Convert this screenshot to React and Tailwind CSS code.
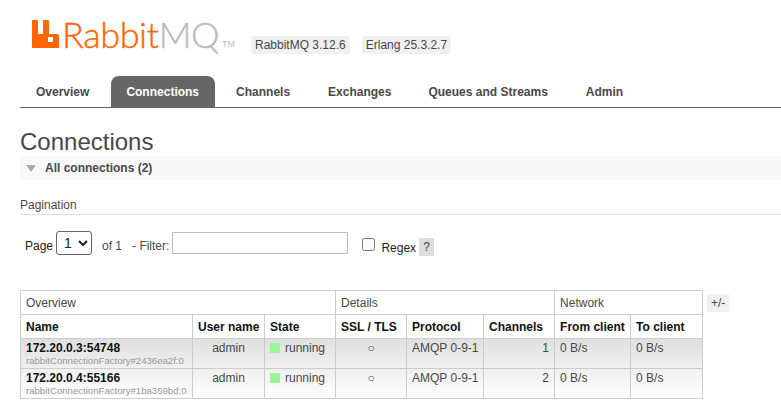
const tabs = [
  { label: "Overview", cls: "px-[15px] mr-[7px]" },
  { label: "Connections", cls: "pl-[15px] pr-[16px] mr-[6px]", active: true },
  { label: "Channels", cls: "px-[15px] mr-[8px]" },
  { label: "Exchanges", cls: "px-[15px] mr-[7px]" },
  { label: "Queues and Streams", cls: "px-[15px] mr-[8px]" },
  { label: "Admin", cls: "px-[15px]" },
];

const rows = [
  { name: "172.20.0.3:54748", sub: "rabbitConnectionFactory#2436ea2f:0", channels: 1, bg: "bg-gradient-to-b from-[#e0e0e0] to-[#f0f0f0]" },
  { name: "172.20.0.4:55166", sub: "rabbitConnectionFactory#1ba359bd:0", channels: 2, bg: "bg-gradient-to-b from-[#f0f0f0] to-white" },
];

const cell = "border border-[#ccc] px-[5px] pt-[2px] align-top whitespace-nowrap leading-[14px]";
const headCell = "border border-[#ccc] px-[5px] text-left font-bold text-[#111] h-[24px] whitespace-nowrap";

function Logo() {
  return (
    <svg width="27" height="28" viewBox="0 0 27 28" className="shrink-0">
      <path
        fill="#ff6600"
        d="M1 0h4a1 1 0 0 1 1 1v13h5V1a1 1 0 0 1 1-1h4a1 1 0 0 1 1 1v13h8a2 2 0 0 1 2 2v11a1 1 0 0 1-1 1H1a1 1 0 0 1-1-1V1a1 1 0 0 1 1-1zM16 17v5h5v-5z"
        fillRule="evenodd"
      />
    </svg>
  );
}

export default function App() {
  return (
    <div className="w-[781px] h-[408px] overflow-hidden bg-white pl-[20px] font-['Liberation_Sans',sans-serif] text-[12px] text-[#484848]">
      <header className="flex items-start h-[76px] pl-[12px] pt-[20px]">
        <Logo />
        <span className="ml-[3px] -mt-[4px] w-[156px] text-[36px] leading-[36px] font-light font-['Lato',sans-serif] tracking-[-0.4px] [-webkit-text-stroke:0.4px] text-[#ff6600]">
          Rabbit<span className="text-[#bbb]">MQ</span>
        </span>
        <span className="mt-[21px] ml-[4px] w-[14px] text-[9px] leading-[7px] text-[#bbb]">TM</span>
        <span className="ml-[15px] mt-[16px] h-[18px] rounded-[4px] bg-[#f0f0f0] px-[4px] leading-[18px]">RabbitMQ 3.12.6</span>
        <span className="ml-[12px] mt-[16px] h-[18px] rounded-[4px] bg-[#f0f0f0] px-[4px] leading-[18px]">Erlang 25.3.2.7</span>
      </header>

      <nav className="flex h-[32px] pl-[1px] border-b-[1px] border-[#666]">
        {tabs.map((t) => (
          <a
            key={t.label}
            className={`${t.cls} h-[31px] leading-[32px] font-bold rounded-t-[8px] ${t.active ? "bg-[#666] text-white" : "text-[#484848]"}`}
          >
            {t.label}
          </a>
        ))}
      </nav>

      <h1 className="mt-[20px] h-[28px] text-[24px] leading-[28px] text-[#484848]">Connections</h1>

      <div className="flex items-center h-[24px] bg-[#f8f8f8]">
        <span className="ml-[6px] h-0 w-0 border-x-[5.5px] border-t-[7px] border-x-transparent border-t-[#aaa]" />
        <span className="ml-[9px] font-bold">All connections (2)</span>
      </div>

      <div className="mt-[17px] h-[18px] border-b border-[#ddd] leading-[17px]">Pagination</div>

      <div className="mt-[17px] flex items-start h-[58px]">
        <span className="ml-[5px] mt-[5px] text-[#222]">Page</span>
        <select className="ml-[3px] -mt-[1px] h-[24px] w-[36px] rounded-[3px] border border-[#666] bg-white text-[14px] text-[#222] pl-[3px]">
          <option>1</option>
        </select>
        <span className="ml-[10px] mt-[5px]">of 1</span>
        <span className="ml-[10px] mt-[5px]">- Filter:</span>
        <input className="ml-[3px] h-[22px] w-[176px] border border-[#bbb]" />
        <input type="checkbox" className="ml-[14px] mt-[6px] h-[13px] w-[13px]" />
        <span className="ml-[6px] mt-[7px] text-[#222]">Regex</span>
        <span className="ml-[3px] mt-[6px] h-[18px] w-[15px] bg-[#ddd] text-center leading-[18px]">?</span>
      </div>

      <div className="flex items-start">
        <table className="w-[682px] table-fixed border-collapse border border-[#ccc]">
          <colgroup>
            <col className="w-[172px]" />
            <col className="w-[72px]" />
            <col className="w-[71px]" />
            <col className="w-[71px]" />
            <col className="w-[77px]" />
            <col className="w-[71px]" />
            <col className="w-[76px]" />
            <col className="w-[72px]" />
          </colgroup>
          <thead>
            <tr className="h-[24px]">
              <th colSpan={3} className={`${headCell} font-normal text-[#484848]`}>Overview</th>
              <th colSpan={3} className={`${headCell} font-normal text-[#484848]`}>Details</th>
              <th colSpan={2} className={`${headCell} font-normal text-[#484848]`}>Network</th>
            </tr>
            <tr className="h-[24px]">
              <th className={headCell}>Name</th>
              <th className={headCell}>User name</th>
              <th className={headCell}>State</th>
              <th className={headCell}>SSL / TLS</th>
              <th className={headCell}>Protocol</th>
              <th className={headCell}>Channels</th>
              <th className={headCell}>From client</th>
              <th className={headCell}>To client</th>
            </tr>
          </thead>
          <tbody>
            {rows.map((r) => (
              <tr key={r.name} className={`h-[30px] ${r.bg}`}>
                <td className={cell}>
                  <div className="font-bold text-[#111]">{r.name}</div>
                  <div className="text-[9.6px] leading-[12px] text-[#999]">{r.sub}</div>
                </td>
                <td className={`${cell} text-center`}>admin</td>
                <td className={cell}>
                  <span className="flex items-center gap-[5px]">
                    <span className="h-[10px] w-[10px] bg-[#98f898]" />
                    running
                  </span>
                </td>
                <td className={`${cell} text-center`}>○</td>
                <td className={cell}>AMQP 0-9-1</td>
                <td className={`${cell} text-right`}>{r.channels}</td>
                <td className={cell}>0 B/s</td>
                <td className={cell}>0 B/s</td>
              </tr>
            ))}
          </tbody>
        </table>
        <span className="ml-[4px] mt-[4px] h-[18px] w-[22px] bg-[#f0f0f0] text-center leading-[18px]">+/-</span>
      </div>
    </div>
  );
}
